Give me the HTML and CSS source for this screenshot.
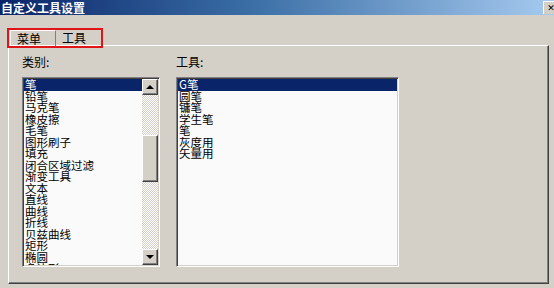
FILE: index.html
```html
<!DOCTYPE html>
<html lang="zh-CN">
<head>
    <meta charset="UTF-8">
    <title>自定义工具设置</title>
    <link rel="stylesheet" href="styles.css">
</head>
<body>

    <div class="titlebar">
        <span class="title">自定义工具设置</span>
        <span class="close">✕</span>
    </div>

    <div class="tabs">
        <div class="tab active">菜单</div>
        <div class="tab">工具</div>
    </div>

    <div class="panel">
        <div class="column left">
            <div class="label">类别:</div>
            <div class="listbox">
                <ul class="items">
                    <li class="selected">笔</li>
                    <li>铅笔</li>
                    <li>马克笔</li>
                    <li>橡皮擦</li>
                    <li>毛笔</li>
                    <li>图形刷子</li>
                    <li>填充</li>
                    <li>闭合区域过滤</li>
                    <li>渐变工具</li>
                    <li>文本</li>
                    <li>直线</li>
                    <li>曲线</li>
                    <li>折线</li>
                    <li>贝兹曲线</li>
                    <li>矩形</li>
                    <li>椭圆</li>
                    <li>多边形</li>
                </ul>
                <div class="scrollbar">
                    <div class="sb-btn"><span class="arrow up"></span></div>
                    <div class="sb-track">
                        <div class="sb-thumb"></div>
                    </div>
                    <div class="sb-btn"><span class="arrow down"></span></div>
                </div>
            </div>
        </div>

        <div class="column right">
            <div class="label">工具:</div>
            <div class="listbox">
                <ul class="items">
                    <li class="selected">G笔</li>
                    <li>圆笔</li>
                    <li>镛笔</li>
                    <li>学生笔</li>
                    <li>笔</li>
                    <li>灰度用</li>
                    <li>矢量用</li>
                </ul>
            </div>
        </div>
    </div>

</body>
</html>
```

FILE: styles.css
```css
body {
    margin: 0;
    width: 554px;
    height: 288px;
    overflow: hidden;
    background: #d4d0c8;
    font-family: "Noto Sans CJK SC", "DejaVu Sans", sans-serif;
    font-size: 12px;
    color: #000;
}

/* title bar */
.titlebar {
    height: 15px;
    display: flex;
    align-items: center;
    justify-content: space-between;
    background: linear-gradient(to right, #0a246a, #3a6ea5 45%, #a6caf0);
}

.title {
    color: #fff;
    font-weight: bold;
    font-size: 12px;
    line-height: 15px;
    padding-left: 1px;
}

.close {
    width: 14px;
    height: 12px;
    margin-right: -4px;
    background: #d4d0c8;
    border-top: 1px solid #fff;
    border-left: 1px solid #fff;
    font-size: 9px;
    font-weight: bold;
    line-height: 12px;
    text-align: center;
}

/* tabs with the red marker */
.tabs {
    position: relative;
    z-index: 1;
    display: inline-flex;
    margin: 13px 0 0 7px;
    width: 92px;
    height: 16px;
    border: 2px solid #e0151a;
}

.tab {
    padding: 0 6px;
    font-size: 12px;
    line-height: 16px;
}

.tab.active {
    width: 32px;
    margin-left: 1px;
    border-left: 1px solid #fff;
    border-top: 1px solid #fff;
    border-right: 1px solid #808080;
    line-height: 15px;
}

/* tab page */
.panel {
    margin: -3px 0 0 8px;
    width: 526px;
    height: 228px;
    border-top: 1px solid #fff;
    border-left: 1px solid #fff;
    border-right: 1px solid #404040;
    border-bottom: 1px solid #404040;
    box-shadow: inset -1px -1px 0 #808080;
    padding: 9px 0 0 13px;
    display: flex;
    gap: 16px;
}

.label {
    height: 14px;
    line-height: 14px;
    margin-bottom: 8px;
}

.column.left .listbox { width: 134px; }
.column.right .listbox { width: 219px; }

.listbox {
    height: 186px;
    display: flex;
    background: #fafafa;
    border-top: 1px solid #808080;
    border-left: 1px solid #808080;
    border-right: 1px solid #fff;
    border-bottom: 1px solid #fff;
    box-shadow: inset 1px 1px 0 #404040, inset -1px -1px 0 #d4d0c8;
    padding: 1px;
    overflow: hidden;
}

.items {
    flex: 1;
    margin: 0;
    padding: 0;
    list-style: none;
    overflow: hidden;
    font-size: 11.5px;
}

.items li {
    height: 11.5px;
    line-height: 11.5px;
    padding-left: 1px;
    white-space: nowrap;
}

.items li.selected {
    background: #0a246a;
    color: #fff;
}

/* scrollbar */
.scrollbar {
    width: 16px;
    display: flex;
    flex-direction: column;
}

.sb-btn, .sb-thumb {
    box-sizing: border-box;
    background: #d4d0c8;
    border-top: 1px solid #fff;
    border-left: 1px solid #fff;
    border-right: 1px solid #404040;
    border-bottom: 1px solid #404040;
    box-shadow: inset -1px -1px 0 #808080;
}

.sb-btn {
    height: 16px;
    display: flex;
    align-items: center;
    justify-content: center;
}

.arrow {
    width: 0;
    height: 0;
    border-left: 4px solid transparent;
    border-right: 4px solid transparent;
}

.arrow.up { border-bottom: 4px solid #000; }
.arrow.down { border-top: 4px solid #000; }

.sb-track {
    flex: 1;
    padding-top: 40px;
    background: repeating-conic-gradient(#fff 0 25%, #d4d0c8 0 50%) 0 0 / 2px 2px;
}

.sb-thumb {
    height: 47px;
}
```
